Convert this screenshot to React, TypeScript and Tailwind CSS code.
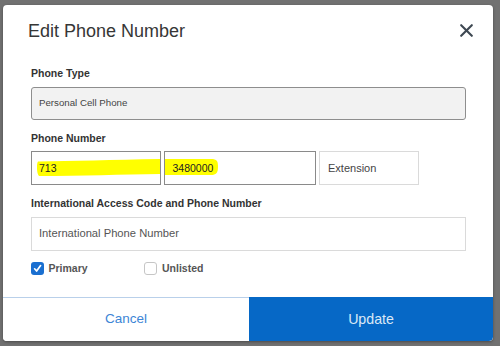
import React from "react";

export default function App() {
  return (
    <div className="w-[500px] h-[346px] bg-[#717171] pt-[5px] pl-[3px] font-['Liberation_Sans',Arial,sans-serif]">
      <div className="w-[490px] h-[336px] bg-white rounded-[4px] flex flex-col overflow-hidden shadow-[0_1px_3px_rgba(0,0,0,0.35)]">
        {/* Header */}
        <div className="flex items-center justify-between pt-[15px] pl-[25px] pr-[20px] h-[37px]">
          <h1 className="text-[18px] leading-[22px] text-[#363636] font-normal">Edit Phone Number</h1>
          <svg width="13" height="13" viewBox="0 0 13 13" className="mt-[-1px]">
            <path d="M1.2 1.2 L11.8 11.8 M11.8 1.2 L1.2 11.8" stroke="#3e4852" strokeWidth="2.1" strokeLinecap="round" />
          </svg>
        </div>

        {/* Body */}
        <div className="px-[28px]">
          <div className="mt-[23.5px] text-[10.5px] leading-[14px] font-bold text-[#333]">Phone Type</div>
          <div className="mt-[7px] h-[33px] w-[435px] rounded-[3px] border border-[#8e8e8e] bg-[#f2f2f2] flex items-center pl-[7px] text-[9.7px] text-[#444]">
            Personal Cell Phone
          </div>

          <div className="mt-[11.5px] text-[10.5px] leading-[14px] font-bold text-[#333]">Phone Number</div>
          <div className="mt-[6px] flex gap-[3px]">
            <div className="relative w-[130px] h-[34px] border border-[#8a8a8a] flex items-center pl-[7px] pt-[2px] text-[10.5px] text-[#222]">
              <svg className="absolute left-0 top-0" width="128" height="32" viewBox="0 0 128 32">
                <path d="M6 9.5 C40 9 80 8 128 7 L128 22 C90 22.5 50 24 7 24 C4.5 22 4.5 11 6 9.5 Z" fill="#ffff00" />
              </svg>
              <span className="relative">713</span>
            </div>
            <div className="relative w-[152px] h-[34px] border border-[#8a8a8a] flex items-center pl-[7.5px] pt-[2px] text-[10.5px] text-[#222]">
              <svg className="absolute left-0 top-0" width="150" height="32" viewBox="0 0 150 32">
                <path d="M0 7 L46 7 C52 7 53 9 53 15 C53 21 51 23 46 23 L0 23 Z" fill="#ffff00" />
              </svg>
              <span className="relative">3480000</span>
            </div>
            <div className="w-[100px] h-[34px] border border-[#dadada] flex items-center pl-[8px] pt-[1px] text-[11px] text-[#444]">
              Extension
            </div>
          </div>

          <div className="mt-[11px] text-[10.5px] leading-[14px] font-bold text-[#333]">International Access Code and Phone Number</div>
          <div className="mt-[6.5px] h-[34px] w-[435px] border border-[#dadada] flex items-center pl-[7px] text-[11.2px] text-[#555]">
            International Phone Number
          </div>

          <div className="mt-[11px] flex items-center h-[13px]">
            <div className="flex items-center w-[113px]">
              <div className="w-[13px] h-[13px] rounded-[3px] bg-[#1a6fd0] flex items-center justify-center">
                <svg width="9" height="9" viewBox="0 0 9 9">
                  <path d="M1.6 4.8 L3.6 7 L7.6 1.6" stroke="#fff" strokeWidth="1.7" fill="none" strokeLinecap="round" strokeLinejoin="round" />
                </svg>
              </div>
              <span className="ml-[4.5px] pt-[1px] text-[10.5px] font-bold text-[#555]">Primary</span>
            </div>
            <div className="flex items-center">
              <div className="w-[13px] h-[13px] rounded-[3px] border border-[#c6c6c6] bg-white" />
              <span className="ml-[5px] pt-[1px] text-[10.5px] font-bold text-[#555]">Unlisted</span>
            </div>
          </div>
        </div>

        {/* Footer */}
        <div className="mt-auto flex h-[44px]">
          <button className="w-[246px] h-full border-t border-[#b9d0ea] bg-white text-[13.5px] text-[#3c85d6] flex items-center justify-center">
            Cancel
          </button>
          <button className="flex-1 h-full bg-[#0668c6] text-[14.2px] text-[#dbe8f6] flex items-center justify-center pt-[2px] rounded-br-[4px]">
            Update
          </button>
        </div>
      </div>
    </div>
  );
}
